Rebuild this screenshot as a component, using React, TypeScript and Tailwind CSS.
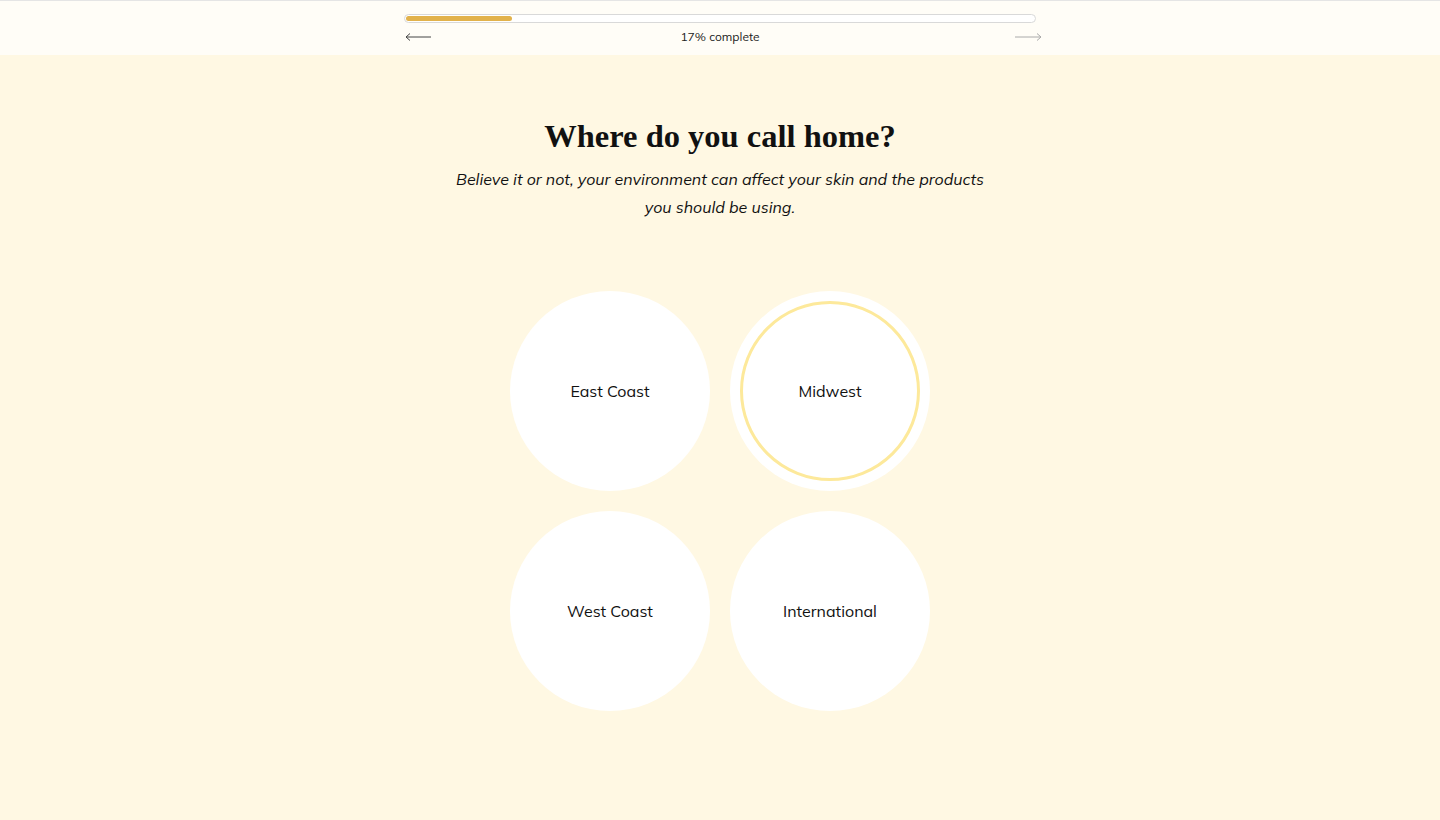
import React from "react";

const options = ["East Coast", "Midwest", "West Coast", "International"];

function Arrow({ dir, className }: { dir: "left" | "right"; className: string }) {
  return (
    <svg width="27" height="10" viewBox="0 0 27 10" className={className}>
      {dir === "left" ? (
        <path d="M1 5H26M1 5L5 1.5M1 5L5 8.5" stroke="currentColor" strokeWidth="1" fill="none" />
      ) : (
        <path d="M0 5H26M26 5L22 1.5M26 5L22 8.5" stroke="currentColor" strokeWidth="1" fill="none" />
      )}
    </svg>
  );
}

export default function App() {
  const selected = "Midwest";

  return (
    <div className="min-h-[820px] bg-[#fff8e3] font-['Mulish','Lato',sans-serif] text-[#111]">
      {/* Progress header */}
      <header className="border-t border-[#e5e5e5] bg-[#fffdf7]">
        <div className="mx-auto flex w-[644px] flex-col pt-[13px] pb-[9px]">
          <div className="ml-[6px] h-[9px] w-[632px] rounded-full border border-[#d9d9d9] bg-white p-[1px]">
            <div className="h-[5px] w-[106px] rounded-full bg-[#e2b24b]" />
          </div>
          <div className="mt-[4px] grid h-[19px] grid-cols-[1fr_auto_1fr] items-center">
            <Arrow dir="left" className="ml-[7px] text-[#444]" />
            <span className="text-[12px] text-[#222]">17% complete</span>
            <Arrow dir="right" className="justify-self-end text-[#aaa]" />
          </div>
        </div>
      </header>

      {/* Question */}
      <main className="flex flex-col items-center pt-[59px]">
        <h1 className="font-['Liberation_Serif',serif] text-[32.5px] font-bold leading-[44px] text-[#111]">
          Where do you call home?
        </h1>
        <p className="mt-[7px] w-[540px] text-center text-[16px] italic leading-[28px] text-[#111]">
          Believe it or not, your environment can affect your skin and the products you should be using.
        </p>

        <div className="mt-[70px] grid grid-cols-2 gap-[20px]">
          {options.map((o) => (
            <button
              key={o}
              className="flex h-[200px] w-[200px] items-center justify-center rounded-full bg-white p-[10px]"
            >
              <span
                className={
                  o === selected
                    ? "flex h-full w-full items-center justify-center rounded-full border-[3px] border-[#fde99b] text-[16px]"
                    : "flex h-full w-full items-center justify-center rounded-full text-[16px]"
                }
              >
                {o}
              </span>
            </button>
          ))}
        </div>
      </main>
    </div>
  );
}
